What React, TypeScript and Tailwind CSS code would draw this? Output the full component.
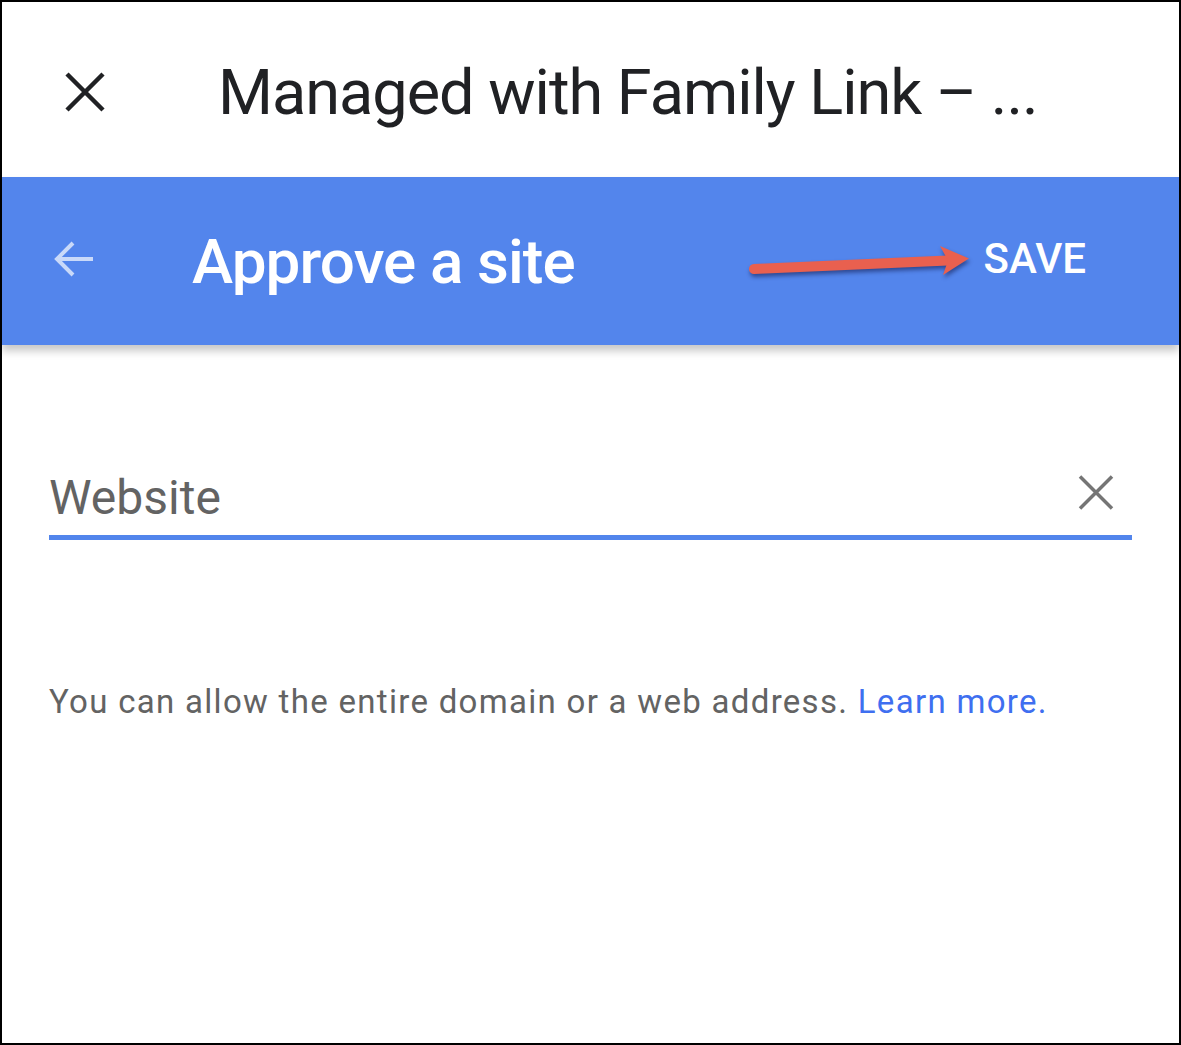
import React from 'react';

// Family Link "Approve a site" screen
export default function App() {
  return (
    <div className="w-[1181px] h-[1045px] bg-white border-2 border-black overflow-hidden relative flex flex-col font-['Roboto',sans-serif]">
      {/* Top header */}
      <header className="h-[175px] flex items-center pt-[8px] shrink-0">
        <button className="ml-[62px] mb-[4px] w-[42px] h-[42px] flex items-center justify-center">
          <svg width="42" height="42" viewBox="0 0 42 42">
            <path d="M3 3 L39 39 M39 3 L3 39" stroke="#202124" strokeWidth="4.5" />
          </svg>
        </button>
        <h1 className="ml-[112px] text-[63px] tracking-[-1px] text-[#202124] whitespace-nowrap">
          Managed with Family Link – ...
        </h1>
      </header>

      {/* Blue toolbar */}
      <div className="h-[168px] bg-[#5385ec] flex items-center shrink-0 shadow-[0_6px_8px_rgba(0,0,0,0.22)] z-10">
        <button className="ml-[51px] mb-[4px] w-[40px] h-[40px] flex items-center justify-center">
          <svg width="40" height="40" viewBox="0 0 40 40">
            <path d="M40 20 H4 M20 4 L4 20 L20 36" fill="none" stroke="#c9d9f9" strokeWidth="4" />
          </svg>
        </button>
        <h2 className="ml-[99px] text-[62px] tracking-[-0.9px] font-medium text-white whitespace-nowrap">Approve a site</h2>
        <button className="ml-auto mr-[93px] mb-[6px] text-[42px] font-medium text-white">SAVE</button>
      </div>

      {/* Annotation arrow */}
      <svg
        className="absolute z-20 left-[738px] top-[234px] drop-shadow-[1px_3px_2px_rgba(0,0,40,0.45)]"
        width="240"
        height="48"
        viewBox="738 234 240 48"
      >
        <path d="M752 267 L946 258.5" stroke="#e9604f" strokeWidth="10" strokeLinecap="round" />
        <path d="M938 244 L967 256.5 L941 273 L946 258.5 Z" fill="#e9604f" />
      </svg>

      {/* Form */}
      <main className="px-[47px] pt-[117px]">
        <div className="flex items-start border-b-[5px] border-[#5285ec] pb-[1px]">
          <span className="text-[48px] text-[#636363] leading-normal">Website</span>
          <svg className="ml-auto mr-[18px] mt-[13px]" width="36" height="35" viewBox="0 0 36 35">
            <path d="M2 1.5 L34 33.5 M34 1.5 L2 33.5" stroke="#757575" strokeWidth="3.5" />
          </svg>
        </div>
        <p className="mt-[137px] text-[33px] tracking-[1.3px] text-[#636363] whitespace-nowrap">
          You can allow the entire domain or a web address.{' '}
          <a className="text-[#3f6ff0]">Learn more.</a>
        </p>
      </main>
    </div>
  );
}
